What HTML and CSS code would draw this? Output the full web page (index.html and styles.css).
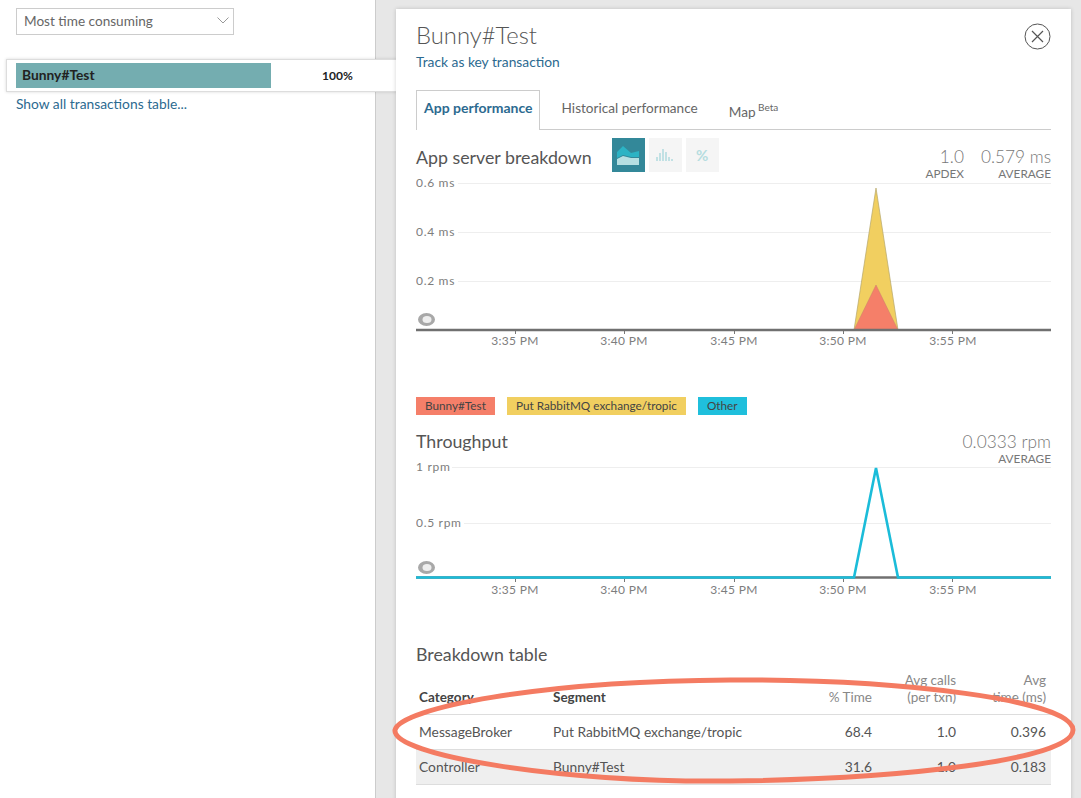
FILE: index.html
```html
<!DOCTYPE html>
<html lang="en">
<head>
  <meta charset="UTF-8">
  <title>Bunny#Test</title>
  <link rel="stylesheet" href="styles.css">
</head>
<body>
  <div class="sidebar">
    <div class="picker">
      <span>Most time consuming</span>
      <svg width="12" height="7" viewBox="0 0 12 7"><path d="M0.5 0.5 L6 6 L11.5 0.5" fill="none" stroke="#999" stroke-width="1"/></svg>
    </div>
    <div class="txn-row">
      <div class="txn-bar">Bunny#Test</div>
      <div class="txn-pct">100%</div>
    </div>
    <a class="link show-all">Show all transactions table...</a>
  </div>

  <div class="main">
    <div class="card">
      <div class="card-head">
        <div>
          <h1>Bunny#Test</h1>
          <a class="link">Track as key transaction</a>
        </div>
        <svg class="close" width="27" height="27" viewBox="0 0 27 27">
          <circle cx="13.5" cy="13.5" r="12.5" fill="none" stroke="#555" stroke-width="1"/>
          <path d="M8 8 L19 19 M19 8 L8 19" stroke="#555" stroke-width="1.2"/>
        </svg>
      </div>

      <div class="tabs">
        <div class="tab active">App performance</div>
        <div class="tab">Historical performance</div>
        <div class="tab map">Map <sup>Beta</sup></div>
      </div>

      <div class="section-head breakdown-head">
        <h2>App server breakdown</h2>
        <div class="modes">
          <div class="mode on">
            <svg width="22" height="19" viewBox="0 0 22 19">
              <path d="M0 6 L6 0 L14 7 L22 5 V11 L14 11 L6 9 L0 12 Z" fill="#2cb3c4"/>
              <path d="M0 13 L6 10 L14 12 L22 12 V19 H0 Z" fill="#b5dfe2"/>
            </svg>
          </div>
          <div class="mode">
            <svg width="18" height="14" viewBox="0 0 18 14">
              <path d="M1 9V13 M4 5V13 M7 1V13 M10 4V13 M13 9V13 M16 11V13" stroke="#b5dde0" stroke-width="1.6"/>
            </svg>
          </div>
          <div class="mode pct">%</div>
        </div>
        <div class="stats">
          <div class="stat"><b>1.0</b><span>APDEX</span></div>
          <div class="stat"><b>0.579 ms</b><span>AVERAGE</span></div>
        </div>
      </div>

      <svg class="chart chart-app" width="635" height="176" viewBox="416 176 635 176">
        <path d="M458 183.5H1051 M458 232.5H1051 M458 281.5H1051" stroke="#eee" stroke-width="1"/>
        <text class="tick-y" x="416" y="187">0.6 ms</text>
        <text class="tick-y" x="416" y="236">0.4 ms</text>
        <text class="tick-y" x="416" y="285">0.2 ms</text>
        <path d="M854 330 L876 188 L898 330 Z" fill="#f1cf60" stroke="#b5a66c" stroke-width="0.7"/>
        <path d="M854 330 L876 285 L898 330 Z" fill="#f57f69" stroke="#c9806c" stroke-width="0.5"/>
        <ellipse cx="426.5" cy="319.5" rx="8.5" ry="6.5" fill="#a8a8a8"/>
        <ellipse cx="427" cy="319.5" rx="4.5" ry="3.5" fill="#eee"/>
        <path d="M416 330H1051" stroke="#707070" stroke-width="2.5"/>
        <path d="M515.500 331V334 M624.500 331V334 M734.500 331V334 M843.500 331V334 M952.500 331V334" stroke="#777" stroke-width="1"/>
        <text class="tick-x" x="515" y="345">3:35 PM</text>
        <text class="tick-x" x="624" y="345">3:40 PM</text>
        <text class="tick-x" x="734" y="345">3:45 PM</text>
        <text class="tick-x" x="843" y="345">3:50 PM</text>
        <text class="tick-x" x="953" y="345">3:55 PM</text>
      </svg>

      <div class="legend">
        <span class="chip red">Bunny#Test</span>
        <span class="chip yellow">Put RabbitMQ exchange/tropic</span>
        <span class="chip blue">Other</span>
      </div>

      <div class="section-head throughput-head">
        <h2>Throughput</h2>
        <div class="stats">
          <div class="stat"><b>0.0333 rpm</b><span>AVERAGE</span></div>
        </div>
      </div>

      <svg class="chart chart-rpm" width="635" height="143" viewBox="416 458 635 143">
        <path d="M452 468.500H1051 M464 524.500H1051" stroke="#eee" stroke-width="1"/>
        <text class="tick-y" x="416" y="472">1 rpm</text>
        <text class="tick-y" x="416" y="528">0.5 rpm</text>
        <ellipse cx="426.500" cy="568.500" rx="8.500" ry="6.500" fill="#a8a8a8"/>
        <ellipse cx="427" cy="568.500" rx="4.500" ry="3.500" fill="#eee"/>
        <path d="M416 578.500H1051" stroke="#707070" stroke-width="2.400"/>
        <path d="M416 578.500H854 L876 469 L898 578.500 H1051" fill="none" stroke="#1bbcd9" stroke-width="2.600"/>
        <path d="M515.500 580V583 M624.500 580V583 M734.500 580V583 M843.500 580V583 M952.500 580V583" stroke="#777" stroke-width="1"/>
        <text class="tick-x" x="515" y="595">3:35 PM</text>
        <text class="tick-x" x="624" y="595">3:40 PM</text>
        <text class="tick-x" x="734" y="595">3:45 PM</text>
        <text class="tick-x" x="843" y="595">3:50 PM</text>
        <text class="tick-x" x="953" y="595">3:55 PM</text>
      </svg>

      <h2 class="table-title">Breakdown table</h2>
      <table class="breakdown">
        <thead>
          <tr>
            <th class="col-cat">Category</th>
            <th class="col-seg">Segment</th>
            <th class="col-num">% Time</th>
            <th class="col-calls">Avg calls<br>(per txn)</th>
            <th class="col-avg">Avg<br>time (ms)</th>
          </tr>
        </thead>
        <tbody>
          <tr>
            <td>MessageBroker</td>
            <td>Put RabbitMQ exchange/tropic</td>
            <td class="num">68.4</td>
            <td class="num">1.0</td>
            <td class="num last">0.396</td>
          </tr>
          <tr class="alt">
            <td>Controller</td>
            <td>Bunny#Test</td>
            <td class="num">31.6</td>
            <td class="num">1.0</td>
            <td class="num last">0.183</td>
          </tr>
        </tbody>
      </table>
    </div>
  </div>

  <!-- hand drawn highlight on top of the screenshot -->
  <svg class="scribble" width="1081" height="798" viewBox="0 0 1081 798">
    <path d="M395 730 C400 708 540 681 730 680 C900 679 1073 700 1073 730 C1073 760 900 779 730 781 C560 783 392 755 395 730 Z" fill="none" stroke="#f47b62" stroke-width="5"/>
  </svg>
</body>
</html>
```

FILE: styles.css
```css
* {
  box-sizing: border-box;
}
html, body {
  margin: 0;
  height: 798px;
  overflow: hidden;
}
body {
  display: flex;
  background: #e7e7e7;
  font-family: "Lato", "Open Sans", sans-serif;
  font-size: 13.8px;
  color: #555;
}
h1, h2 {
  margin: 0;
  font-weight: 400;
}
.link {
  color: #2c6a90;
  font-size: 13.8px;
}

/* left column */
.sidebar {
  width: 376px;
  flex-shrink: 0;
  padding-top: 8px;
  background: #fff;
  border-right: 1px solid #ccc;
}
.picker {
  display: flex;
  align-items: center;
  justify-content: space-between;
  width: 218px;
  height: 27px;
  margin-left: 16px;
  padding: 0 4px 2px 7px;
  border: 1px solid #ccc;
  color: #666;
  font-size: 13.6px;
}
.txn-row {
  position: relative;
  z-index: 1;
  display: flex;
  align-items: center;
  width: 400px;
  height: 33px;
  margin: 24px 0 0 6px;
  padding-left: 9px;
  background: #fff;
  border: 1px solid #ddd;
  box-shadow: 0 0 3px rgba(0, 0, 0, 0.15);
  color: #222;
  font-weight: 700;
  font-size: 13.8px;
}
.txn-bar {
  width: 255px;
  height: 25px;
  padding-left: 6px;
  line-height: 24px;
  background: #74adb0;
}
.txn-pct {
  margin-left: 51px;
  font-size: 12px;
}
.show-all {
  display: block;
  margin: 2px 0 0 16px;
  line-height: 20px;
}

/* right card */
.main {
  flex: 1;
  padding: 9px 10px 0 20px;
}
.card {
  position: relative;
  z-index: 2;
  height: 800px;
  padding: 0 20px;
  background: #fff;
  box-shadow: 0 0 4px rgba(0, 0, 0, 0.18);
}
.card-head {
  display: flex;
  justify-content: space-between;
  height: 81px;
  padding-top: 11px;
}
.card-head h1 {
  font-size: 23.8px;
  font-weight: 300;
  line-height: 30px;
}
.card-head .link {
  display: block;
  margin-top: 3px;
  line-height: 18px;
}
.close {
  margin-top: 3px;
}
.tabs {
  display: flex;
  height: 40px;
  border-bottom: 1px solid #ccc;
}
.tab {
  height: 40px;
  padding: 0 22px;
  font-size: 13.6px;
  line-height: 36px;
  color: #666;
}
.tab.active {
  padding: 0 6px 0 7px;
  background: #fff;
  border: 1px solid #ccc;
  border-bottom: 0;
  color: #2c6a90;
  font-size: 14px;
  font-weight: 700;
  line-height: 34px;
}
.tab.map {
  padding: 4px 0 0 9px;
}
.tab sup {
  margin-left: -1px;
  font-size: 10px;
  line-height: 0;
}

.section-head {
  display: flex;
  align-items: flex-start;
}
.section-head h2 {
  font-size: 17.8px;
  line-height: 24px;
}
.breakdown-head {
  height: 46px;
  padding-top: 8px;
}
.breakdown-head h2 {
  margin-top: 7px;
}
.modes {
  display: flex;
  gap: 4px;
  margin-left: 20px;
}
.mode {
  display: flex;
  align-items: center;
  justify-content: center;
  width: 33px;
  height: 34px;
  background: #f5f5f5;
}
.mode.on {
  background: #338899;
}
.mode.pct {
  color: #b5dde0;
  font-size: 15px;
  font-weight: 700;
}
.stats {
  display: flex;
  gap: 17px;
  margin-left: auto;
  text-align: right;
}
.breakdown-head .stats {
  margin-top: 8px;
}
.stat b {
  display: block;
  color: #777;
  font-size: 17.3px;
  font-weight: 300;
  line-height: 21px;
}
.stat span {
  display: block;
  color: #777;
  font-size: 11.8px;
  line-height: 14px;
}

.chart {
  display: block;
}
.tick-y, .tick-x {
  fill: #7d7d7d;
  font-size: 12px;
  letter-spacing: 0.3px;
}
.tick-y {
  letter-spacing: 0.7px;
}
.tick-x {
  text-anchor: middle;
}

.legend {
  display: flex;
  gap: 12px;
  margin-top: 45px;
  font-size: 11.75px;
}
.chip {
  height: 18px;
  padding: 0 9px;
  line-height: 18px;
  color: #444;
}
.chip.red { background: #f57f69; }
.chip.yellow { background: #f1cf60; }
.chip.blue { background: #1fbfdc; }
.throughput-head {
  height: 28px;
  margin-top: 14px;
}
.throughput-head .stats {
  margin-top: 2px;
}
.table-title {
  margin-top: 42px;
  font-size: 17.8px;
  line-height: 24px;
}

.breakdown {
  width: 635px;
  margin-top: 6px;
  border-collapse: collapse;
  table-layout: fixed;
  font-size: 13.8px;
}
.breakdown th {
  height: 36px;
  padding: 0 4px 8px 3px;
  vertical-align: bottom;
  border-bottom: 1px solid #ddd;
  color: #888;
  font-size: 13.5px;
  font-weight: 400;
  line-height: 17px;
  text-align: right;
}
.breakdown th.col-cat,
.breakdown th.col-seg {
  color: #444;
  font-weight: 700;
  text-align: left;
}
.col-cat { width: 134px; }
.col-seg { width: 260px; }
.col-num { width: 66px; }
.col-calls { width: 84px; }
.col-avg { width: 91px; }
.breakdown th.col-avg {
  padding-right: 5px;
}
.breakdown td {
  height: 35px;
  padding: 0 4px 2px 3px;
  border-bottom: 1px solid #ddd;
  white-space: nowrap;
}
.breakdown td.num {
  text-align: right;
}
.breakdown td.last {
  padding-right: 5px;
}
.breakdown .alt td {
  background: #efefef;
}

.scribble {
  position: absolute;
  top: 0;
  left: 0;
  z-index: 3;
  pointer-events: none;
}
```
